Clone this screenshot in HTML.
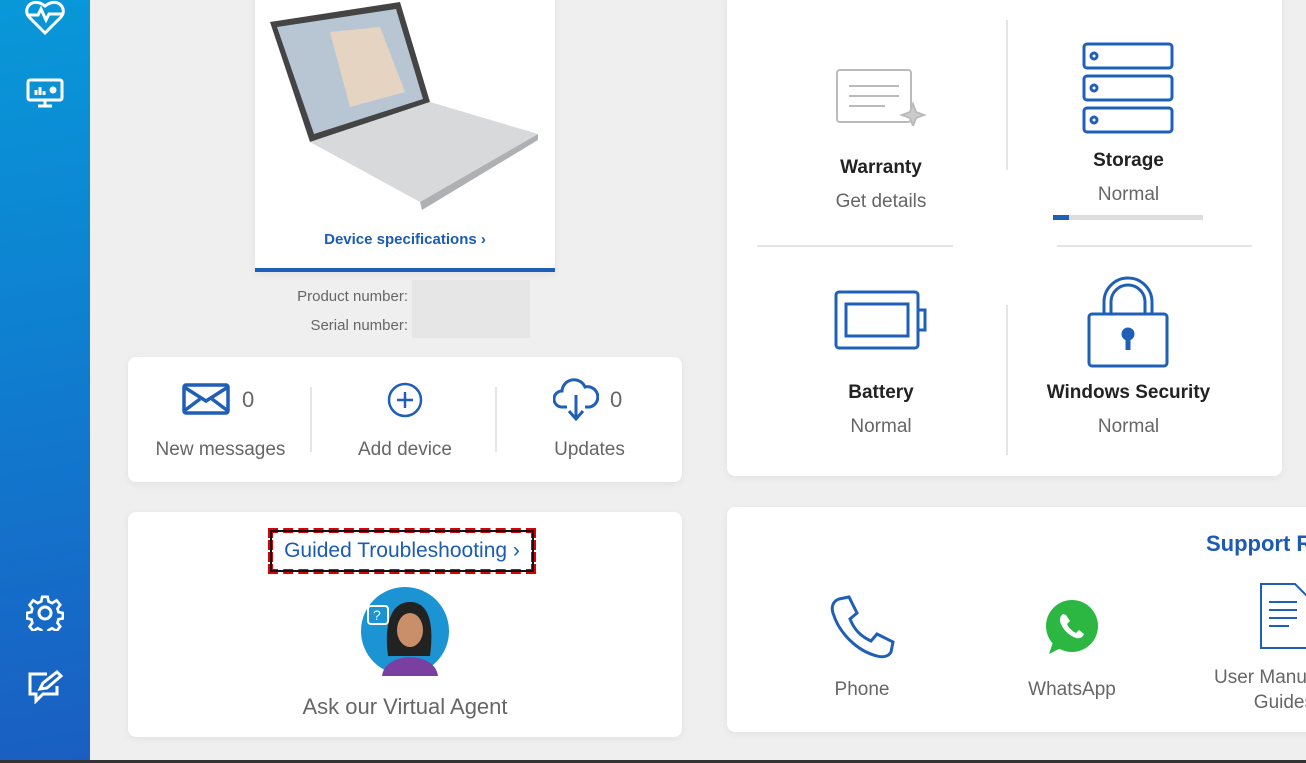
<!DOCTYPE html>
<html><head><style>
*{margin:0;padding:0;box-sizing:border-box}
body{width:1306px;height:763px;overflow:hidden;background:#efefef;font-family:"Liberation Sans",sans-serif;position:relative}
.sb{position:absolute;left:0;top:0;width:90px;height:763px;background:linear-gradient(170deg,#0898d8 0%,#0f7fd0 45%,#1a5ec2 100%)}
.card{position:absolute;background:#fff;border-radius:8px;box-shadow:0 2px 8px rgba(0,0,0,.06)}
.t{position:absolute;text-align:center;white-space:nowrap}
.g{color:#666;font-size:19px}
.b{color:#222;font-size:19px;font-weight:bold}
.blue{color:#1c5bb3}
.ic{position:absolute}
</style></head><body>
<div class="sb">
<svg class="ic" style="left:24px;top:0" width="42" height="36" viewBox="0 0 42 36" fill="none" stroke="#fff" stroke-width="3"><path d="M21 33 L5 17 C-2 9 8 -4 21 6 C34 -4 44 9 37 17 Z"/><path d="M4 15 H14 L17 9 L22 20 L25 14 H38"/></svg>
<svg class="ic" style="left:26px;top:78px" width="38" height="32" viewBox="0 0 38 32" fill="none" stroke="#fff" stroke-width="3"><rect x="2" y="2" width="34" height="20" rx="2"/><path d="M12 28h14M19 22v6M10 17v-5M14 17v-8M18 17v-4"/><circle cx="27" cy="12" r="2" fill="#fff"/></svg>
<svg class="ic" style="left:26px;top:595px" width="38" height="36" viewBox="0 0 38 36" fill="none" stroke="#fff" stroke-width="3"><path d="M16 2h6l1 5 4 2 5-3 4 5-3 4 1 4 5 1v6l-5 1-1 4 3 4-4 5-5-3-4 2-1 5h-6l-1-5-4-2-5 3-4-5 3-4-1-4-5-1v-6l5-1 1-4-3-4 4-5 5 3 4-2z" transform="scale(.9) translate(2 0)"/><circle cx="19" cy="18" r="6"/></svg>
<svg class="ic" style="left:27px;top:670px" width="36" height="34" viewBox="0 0 36 34" fill="none" stroke="#fff" stroke-width="3"><path d="M20 4H3v20h6v7l7-7h14v-8"/><path d="M13 19l3-6L30 2l4 4-14 12z"/></svg>
</div>

<div class="card" style="left:255px;top:-10px;width:300px;height:282px;border-radius:0;border-bottom:4px solid #1f5fb8">
<svg style="position:absolute;left:15px;top:12px" width="270" height="210" viewBox="0 0 270 210">
<polygon points="0,20 130,0 160,100 40,140" fill="#444"/>
<polygon points="7,25 126,7 153,97 44,132" fill="#b8c6d4"/>
<polygon points="60,30 110,25 135,90 80,105" fill="#e6d4c2"/>
<polygon points="40,140 160,100 268,132 150,200" fill="#d8d9db"/>
<polygon points="150,200 268,132 268,138 152,208" fill="#aeb0b3"/>
</svg>
<div class="t blue" style="left:0;width:300px;top:241px;font-size:15px;font-weight:bold">Device specifications ›</div>
</div>
<div class="t" style="left:230px;width:178px;text-align:right;top:288px;font-size:15px;color:#666">Product number:</div>
<div class="t" style="left:230px;width:178px;text-align:right;top:317px;font-size:15px;color:#666">Serial number:</div>
<div style="position:absolute;left:412px;top:280px;width:118px;height:58px;background:#e6e6e6"></div>

<div class="card" style="left:128px;top:357px;width:554px;height:125px">
<svg class="ic" style="left:54px;top:26px" width="48" height="32" viewBox="0 0 48 32" fill="none" stroke="#1f5fb8" stroke-width="3.5"><rect x="2" y="2" width="44" height="28" rx="2"/><path d="M2 4l22 14 22-14M2 28l16-12M46 28 30 16"/></svg>
<div class="t g" style="left:114px;top:30px;font-size:22px">0</div>
<div class="t g" style="left:0;width:185px;top:82px">New messages</div>
<div style="position:absolute;left:182px;top:30px;width:2px;height:65px;background:#e5e5e5"></div>
<svg class="ic" style="left:258px;top:24px" width="38" height="38" viewBox="0 0 38 38" fill="none" stroke="#1f5fb8" stroke-width="2.5"><circle cx="19" cy="19" r="16"/><path d="M19 11v16M11 19h16"/></svg>
<div class="t g" style="left:185px;width:184px;top:82px">Add device</div>
<div style="position:absolute;left:367px;top:30px;width:2px;height:65px;background:#e5e5e5"></div>
<svg class="ic" style="left:425px;top:20px" width="46" height="44" viewBox="0 0 46 44" fill="none" stroke="#1f5fb8" stroke-width="3"><path d="M14 30H9a8 8 0 0 1 0-16 12 12 0 0 1 23-4 9 9 0 0 1 5 20h-5"/><path d="M23 18v24M16 34l7 8 7-8"/></svg>
<div class="t g" style="left:482px;top:30px;font-size:22px">0</div>
<div class="t g" style="left:369px;width:185px;top:82px">Updates</div>
</div>

<div class="card" style="left:128px;top:512px;width:554px;height:225px">
<div class="t blue" style="left:140px;top:16px;width:268px;height:46px;border:5px dashed #d00;outline:2px solid #111;outline-offset:-4px;font-size:21px;line-height:36px">Guided Troubleshooting ›</div>
<svg class="ic" style="left:232px;top:74px" width="90" height="90" viewBox="0 0 90 90"><circle cx="45" cy="45" r="44" fill="#1c93d3"/><path d="M28 70 C24 40 30 16 50 16 C70 16 74 40 70 70Z" fill="#222"/><ellipse cx="50" cy="44" rx="13" ry="17" fill="#c98f6a"/><path d="M22 90 C25 65 75 65 78 90Z" fill="#7a3fa0"/><rect x="8" y="20" width="20" height="18" rx="3" fill="none" stroke="#fff" stroke-width="2"/><text x="13" y="34" fill="#fff" font-size="14" font-family="Liberation Sans">?</text></svg>
<div class="t g" style="left:0;width:554px;top:182px;font-size:22px">Ask our Virtual Agent</div>
</div>

<div class="card" style="left:727px;top:-10px;width:555px;height:486px">
<svg class="ic" style="left:108px;top:78px" width="92" height="58" viewBox="0 0 92 58" fill="none" stroke="#bbb" stroke-width="2"><rect x="2" y="2" width="74" height="52" rx="3"/><path d="M14 18h50M14 28h50M14 38h36"/><path d="M78 36l3 8 8 3-8 3-3 8-3-8-8-3 8-3z" fill="#ccc"/></svg>
<div class="t b" style="left:30px;width:248px;top:167px">Warranty</div>
<div class="t g" style="left:30px;width:248px;top:201px">Get details</div>
<div style="position:absolute;left:279px;top:30px;width:2px;height:150px;background:#e5e5e5"></div>
<svg class="ic" style="left:355px;top:52px" width="92" height="92" viewBox="0 0 92 92" fill="none" stroke="#1f5fb8" stroke-width="3"><rect x="2" y="2" width="88" height="24" rx="3"/><rect x="2" y="34" width="88" height="24" rx="3"/><rect x="2" y="66" width="88" height="24" rx="3"/><circle cx="12" cy="14" r="3"/><circle cx="12" cy="46" r="3"/><circle cx="12" cy="78" r="3"/></svg>
<div class="t b" style="left:280px;width:243px;top:160px">Storage</div>
<div class="t g" style="left:280px;width:243px;top:194px">Normal</div>
<div style="position:absolute;left:326px;top:225px;width:150px;height:5px;background:#ddd"><div style="width:16px;height:5px;background:#1f5fb8"></div></div>
<div style="position:absolute;left:30px;top:255px;width:196px;height:2px;background:#e5e5e5"></div>
<div style="position:absolute;left:330px;top:255px;width:195px;height:2px;background:#e5e5e5"></div>
<svg class="ic" style="left:107px;top:300px" width="94" height="60" viewBox="0 0 94 60" fill="none" stroke="#1f5fb8" stroke-width="3"><rect x="2" y="2" width="82" height="56" rx="3"/><rect x="12" y="14" width="62" height="32"/><path d="M84 20h7v20h-7"/></svg>
<div class="t b" style="left:30px;width:248px;top:392px">Battery</div>
<div class="t g" style="left:30px;width:248px;top:426px">Normal</div>
<div style="position:absolute;left:279px;top:315px;width:2px;height:150px;background:#e5e5e5"></div>
<svg class="ic" style="left:360px;top:284px" width="82" height="94" viewBox="0 0 82 94" fill="none" stroke="#1f5fb8" stroke-width="3"><path d="M17 40V28a24 24 0 0 1 48 0v12M24 40V28a17 17 0 0 1 34 0v12"/><rect x="2" y="40" width="78" height="52" rx="3"/><circle cx="41" cy="60" r="5" fill="#1f5fb8"/><path d="M41 62v14" stroke-width="5"/></svg>
<div class="t b" style="left:280px;width:243px;top:392px">Windows Security</div>
<div class="t g" style="left:280px;width:243px;top:426px">Normal</div>
</div>

<div class="card" style="left:727px;top:507px;width:600px;height:225px">
<div class="t blue" style="left:479px;top:24px;font-size:22px;font-weight:bold">Support Re</div>
<svg class="ic" style="left:102px;top:88px" width="66" height="66" viewBox="0 0 66 66" fill="none" stroke="#1f5fb8" stroke-width="3"><path d="M10 4l10-2 8 16-7 6c4 10 10 17 21 22l6-7 16 8-2 10c-2 4-8 6-14 4C28 56 10 38 4 18 2 12 4 6 10 4z"/></svg>
<div class="t g" style="left:60px;width:150px;top:172px">Phone</div>
<svg class="ic" style="left:316px;top:91px" width="58" height="58" viewBox="0 0 58 58"><circle cx="29" cy="28" r="26" fill="#2bb741"/><path d="M6 56l4-12 8 6z" fill="#2bb741"/><path d="M20 16c-3 2-4 6-2 10 3 7 9 12 15 14 4 1 7-1 8-4l-5-4-3 3c-4-2-7-5-9-9l3-3-4-6z" fill="#fff"/></svg>
<div class="t g" style="left:270px;width:150px;top:172px">WhatsApp</div>
<svg class="ic" style="left:532px;top:75px" width="50" height="68" viewBox="0 0 50 68" fill="none" stroke="#1f5fb8" stroke-width="2"><path d="M2 2h34l12 12v52H2z"/><path d="M10 20h28M10 28h28M10 36h28M10 44h20"/></svg>
<div class="t g" style="left:487px;top:158px;font-size:19px;text-align:right;width:100px;line-height:25px">User Manua<br>Guides</div>
</div>
<div style="position:absolute;left:0;top:760px;width:1306px;height:3px;background:#333"></div>
</body></html>
